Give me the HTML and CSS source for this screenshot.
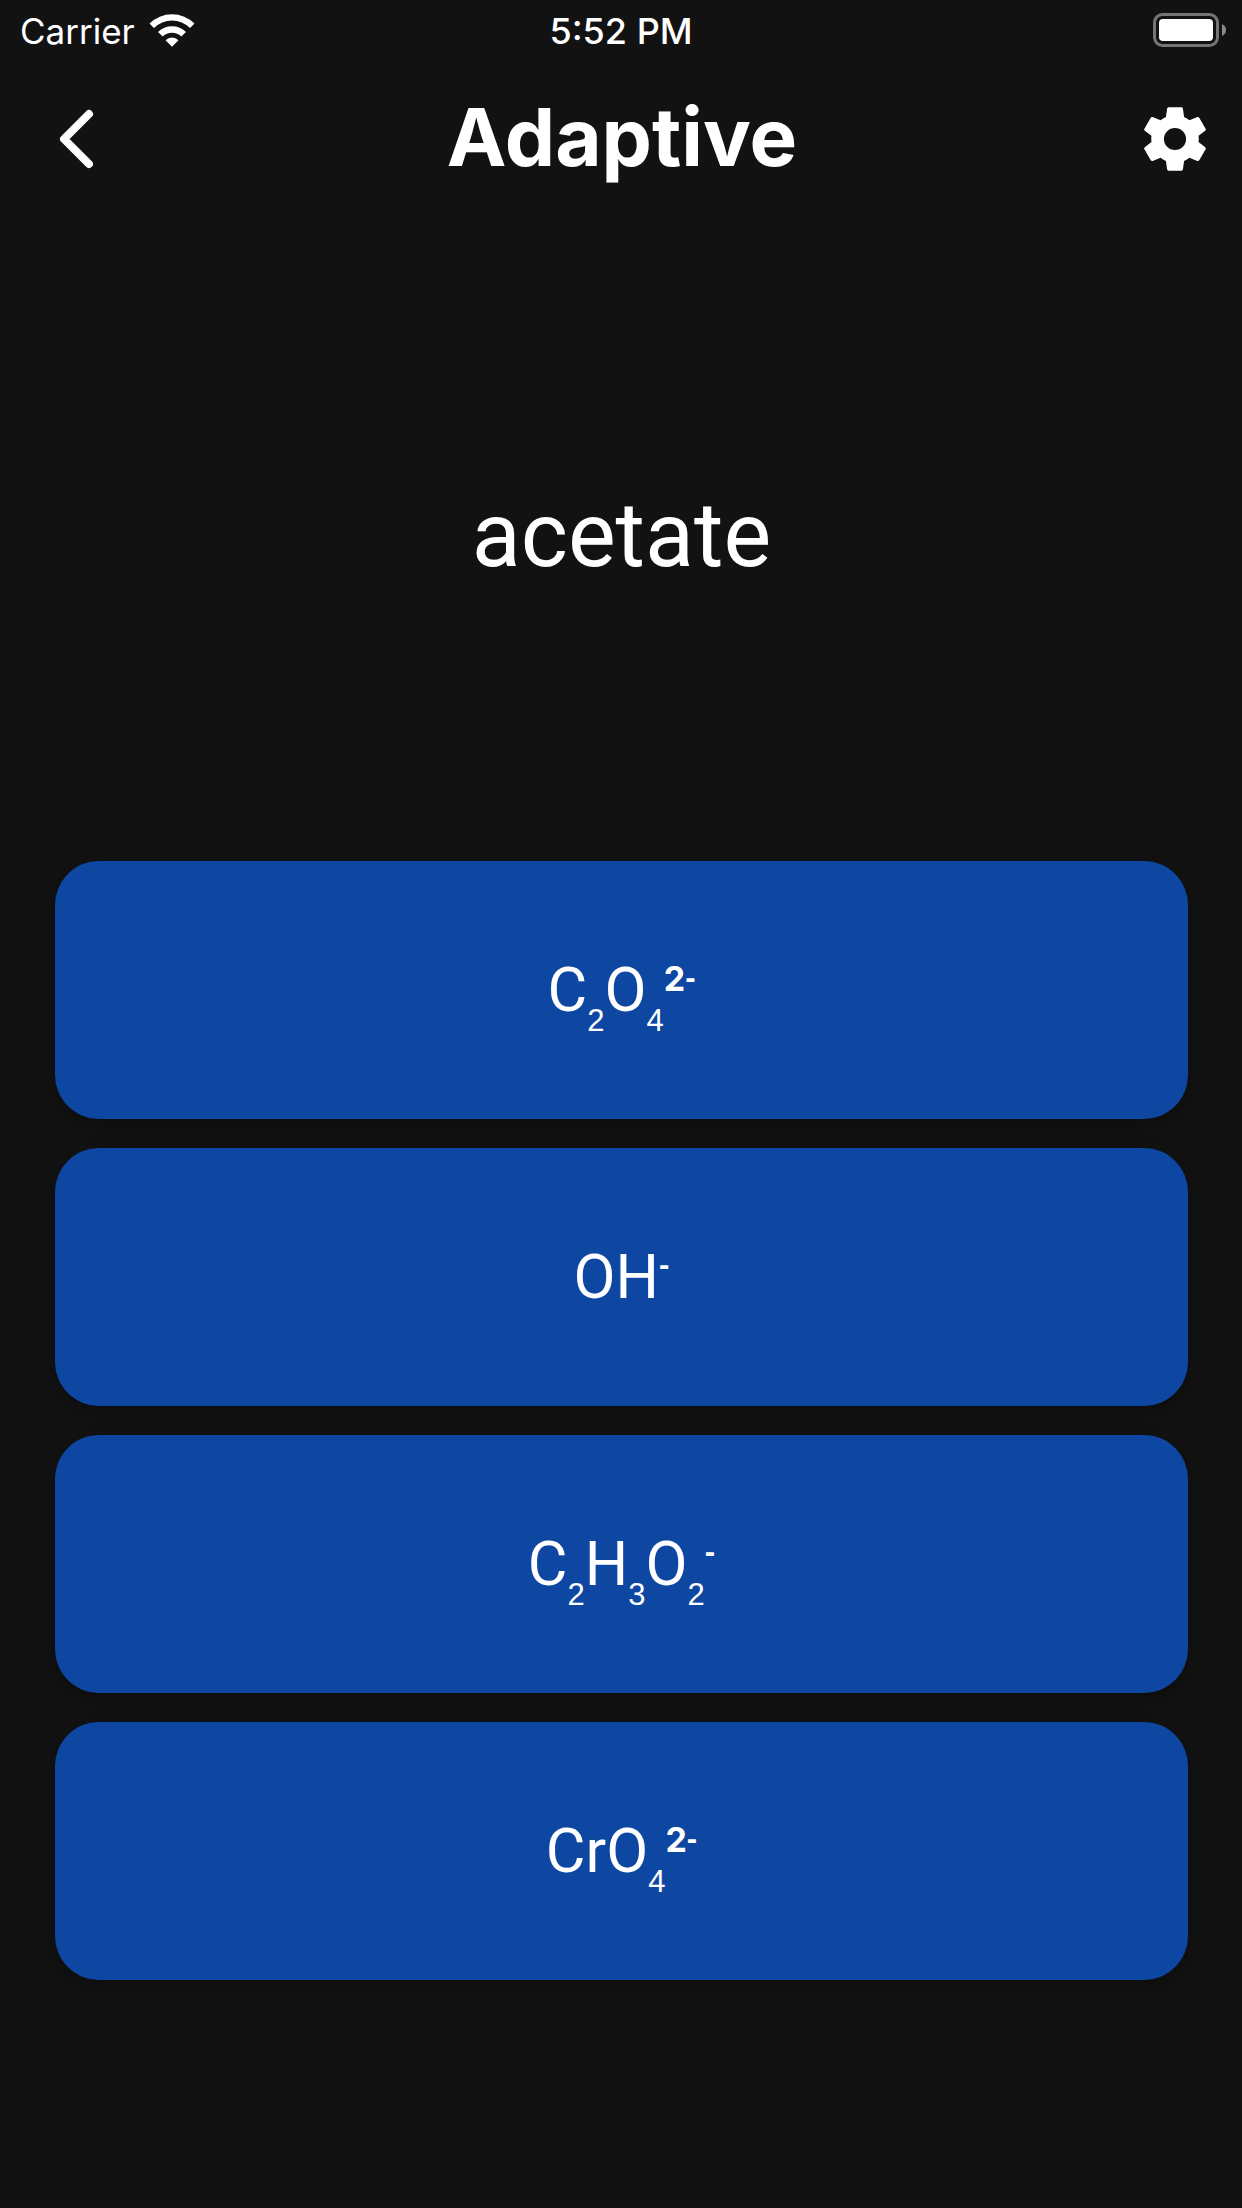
FILE: index.html
```html
<!DOCTYPE html>
<html lang="en">
<head>
<meta charset="utf-8">
<meta name="viewport" content="width=device-width, initial-scale=1">
<title>Adaptive</title>
<link rel="stylesheet" href="styles.css">
</head>
<body>
<div class="screen">
  <div class="status">
    <div class="status-left">
      <span class="carrier">Carrier</span>
      <svg class="wifi" viewBox="0 0 46 34" aria-hidden="true">
        <path d="M0.500 10.500A32 32 0 0 1 45.500 10.500L41.000 15.000A25.500 25.500 0 0 0 5.000 15.000Z"/>
        <path d="M9 19A20 20 0 0 1 37 19L32.300 23.500A13.500 13.500 0 0 0 13.700 23.500Z"/>
        <path d="M16.500 27.200A9 9 0 0 1 29.500 27.200L23 33.700Z"/>
      </svg>
    </div>
    <time class="clock">5:52 PM</time>
    <svg class="battery" viewBox="0 0 74 34" aria-hidden="true">
      <rect class="battery-case" x="1.500" y="1.500" width="63" height="31" rx="8"/>
      <rect class="battery-fill" x="6" y="6" width="54" height="22" rx="4"/>
      <path class="battery-tip" d="M69 11Q73 13 73 17T69 23Z"/>
    </svg>
  </div>
  <header class="bar">
    <button class="icon-button" type="button" aria-label="Back">
      <svg class="back" viewBox="0 0 36 60" aria-hidden="true"><path d="M30 5L5 30L30 55"/></svg>
    </button>
    <h1 class="title">Adaptive</h1>
    <button class="icon-button" type="button" aria-label="Settings">
      <svg class="cog" viewBox="0 0 24 24" aria-hidden="true"><path d="M12 15.500A3.500 3.500 0 0 1 8.500 12A3.500 3.500 0 0 1 12 8.500A3.500 3.500 0 0 1 15.500 12A3.500 3.500 0 0 1 12 15.500M19.430 12.970C19.470 12.650 19.500 12.330 19.500 12C19.500 11.670 19.470 11.340 19.430 11L21.540 9.370C21.730 9.220 21.780 8.950 21.660 8.730L19.660 5.270C19.540 5.050 19.270 4.960 19.050 5.050L16.560 6.050C16.040 5.660 15.500 5.320 14.870 5.070L14.500 2.420C14.460 2.180 14.250 2 14 2H10C9.750 2 9.540 2.180 9.500 2.420L9.130 5.070C8.500 5.320 7.960 5.660 7.440 6.050L4.950 5.050C4.730 4.960 4.460 5.050 4.340 5.270L2.340 8.730C2.210 8.950 2.270 9.220 2.460 9.370L4.570 11C4.530 11.340 4.500 11.670 4.500 12C4.500 12.330 4.530 12.650 4.570 12.970L2.460 14.630C2.270 14.780 2.210 15.050 2.340 15.270L4.340 18.730C4.460 18.950 4.730 19.030 4.950 18.950L7.440 17.940C7.960 18.340 8.500 18.680 9.130 18.930L9.500 21.580C9.540 21.820 9.750 22 10 22H14C14.250 22 14.460 21.820 14.500 21.580L14.870 18.930C15.500 18.670 16.040 18.340 16.560 17.940L19.050 18.950C19.270 19.030 19.540 18.950 19.660 18.730L21.660 15.270C21.780 15.050 21.730 14.780 21.540 14.630L19.430 12.970Z"/></svg>
    </button>
  </header>
  <main class="quiz">
    <p class="question">acetate</p>
    <div class="answers">
      <button class="answer" type="button"><span class="formula">C<sub>2</sub>O<sub>4</sub><sup class="charge"><b>2</b>-</sup></span></button>
      <button class="answer" type="button"><span class="formula">OH<sup class="charge">-</sup></span></button>
      <button class="answer" type="button"><span class="formula">C<sub>2</sub>H<sub>3</sub>O<sub>2</sub><sup class="charge">-</sup></span></button>
      <button class="answer" type="button"><span class="formula">CrO<sub>4</sub><sup class="charge"><b>2</b>-</sup></span></button>
    </div>
  </main>
</div>
</body>
</html>
```

FILE: styles.css
```css
* {
  box-sizing: border-box;
}

body {
  margin: 0;
  background: #121212;
  color: #fff;
  font-family: Roboto, "Liberation Sans", sans-serif;
}

button {
  border: 0;
  padding: 0;
  color: inherit;
  font: inherit;
  cursor: pointer;
}

.screen {
  display: flex;
  flex-direction: column;
  min-height: 100vh;
}

.status {
  display: grid;
  grid-template-columns: 1fr auto 1fr;
  align-items: center;
  height: 60px;
  padding: 0 15px;
  font-family: Inter, sans-serif;
  font-size: 36px;
  line-height: 44px;
}

.status-left {
  display: flex;
  align-items: center;
  gap: 14px;
  padding-left: 5px;
}

.carrier {
  padding-top: 2px;
  font-size: 35px;
  font-weight: 400;
}

.clock {
  padding-top: 2px;
  font-weight: 500;
}

.wifi {
  width: 46px;
  height: 34px;
  fill: #fff;
}

.battery {
  width: 74px;
  height: 34px;
  justify-self: end;
}

.battery-case {
  fill: none;
  stroke: #757575;
  stroke-width: 3;
}

.battery-fill {
  fill: #fff;
}

.battery-tip {
  fill: #8a8a8a;
}

.bar {
  display: flex;
  align-items: center;
  justify-content: space-between;
  height: 157px;
  padding: 0 29px 0 31px;
}

.icon-button {
  display: flex;
  align-items: center;
  justify-content: center;
  width: 76px;
  height: 76px;
  background: none;
}

.back {
  width: 36px;
  height: 60px;
  margin-left: 16px;
  fill: none;
  stroke: #fff;
  stroke-width: 8;
  stroke-linecap: round;
  stroke-linejoin: round;
}

.cog {
  width: 76px;
  height: 76px;
  fill: #fff;
}

.title {
  margin: 0;
  padding-bottom: 4px;
  font-family: Inter, sans-serif;
  font-size: 80px;
  font-weight: 700;
  line-height: 96px;
}

.quiz {
  display: flex;
  flex: 1;
  flex-direction: column;
  padding: 0 54px 228px 55px;
}

.question {
  display: flex;
  flex: 1;
  align-items: center;
  justify-content: center;
  margin: 0;
  padding-bottom: 6px;
  font-size: 90px;
  line-height: 108px;
}

.answers {
  display: grid;
  gap: 29px;
}

.answer {
  display: flex;
  align-items: center;
  justify-content: center;
  height: 258px;
  border-radius: 44px;
  background: #0d47a1;
  box-shadow: 0 6px 18px rgba(0, 0, 0, 0.3);
}

.formula {
  font-size: 61px;
  line-height: 72px;
}

.formula sub,
.formula sup {
  font-family: "Liberation Sans", Arial, sans-serif;
  font-size: 31px;
  line-height: 0;
}

.formula sub {
  vertical-align: -20px;
}

.formula sup {
  font-weight: 700;
  vertical-align: 23px;
}

.charge b {
  font-family: Inter, sans-serif;
  font-size: 34px;
  font-weight: 700;
  vertical-align: -3px;
}
```
